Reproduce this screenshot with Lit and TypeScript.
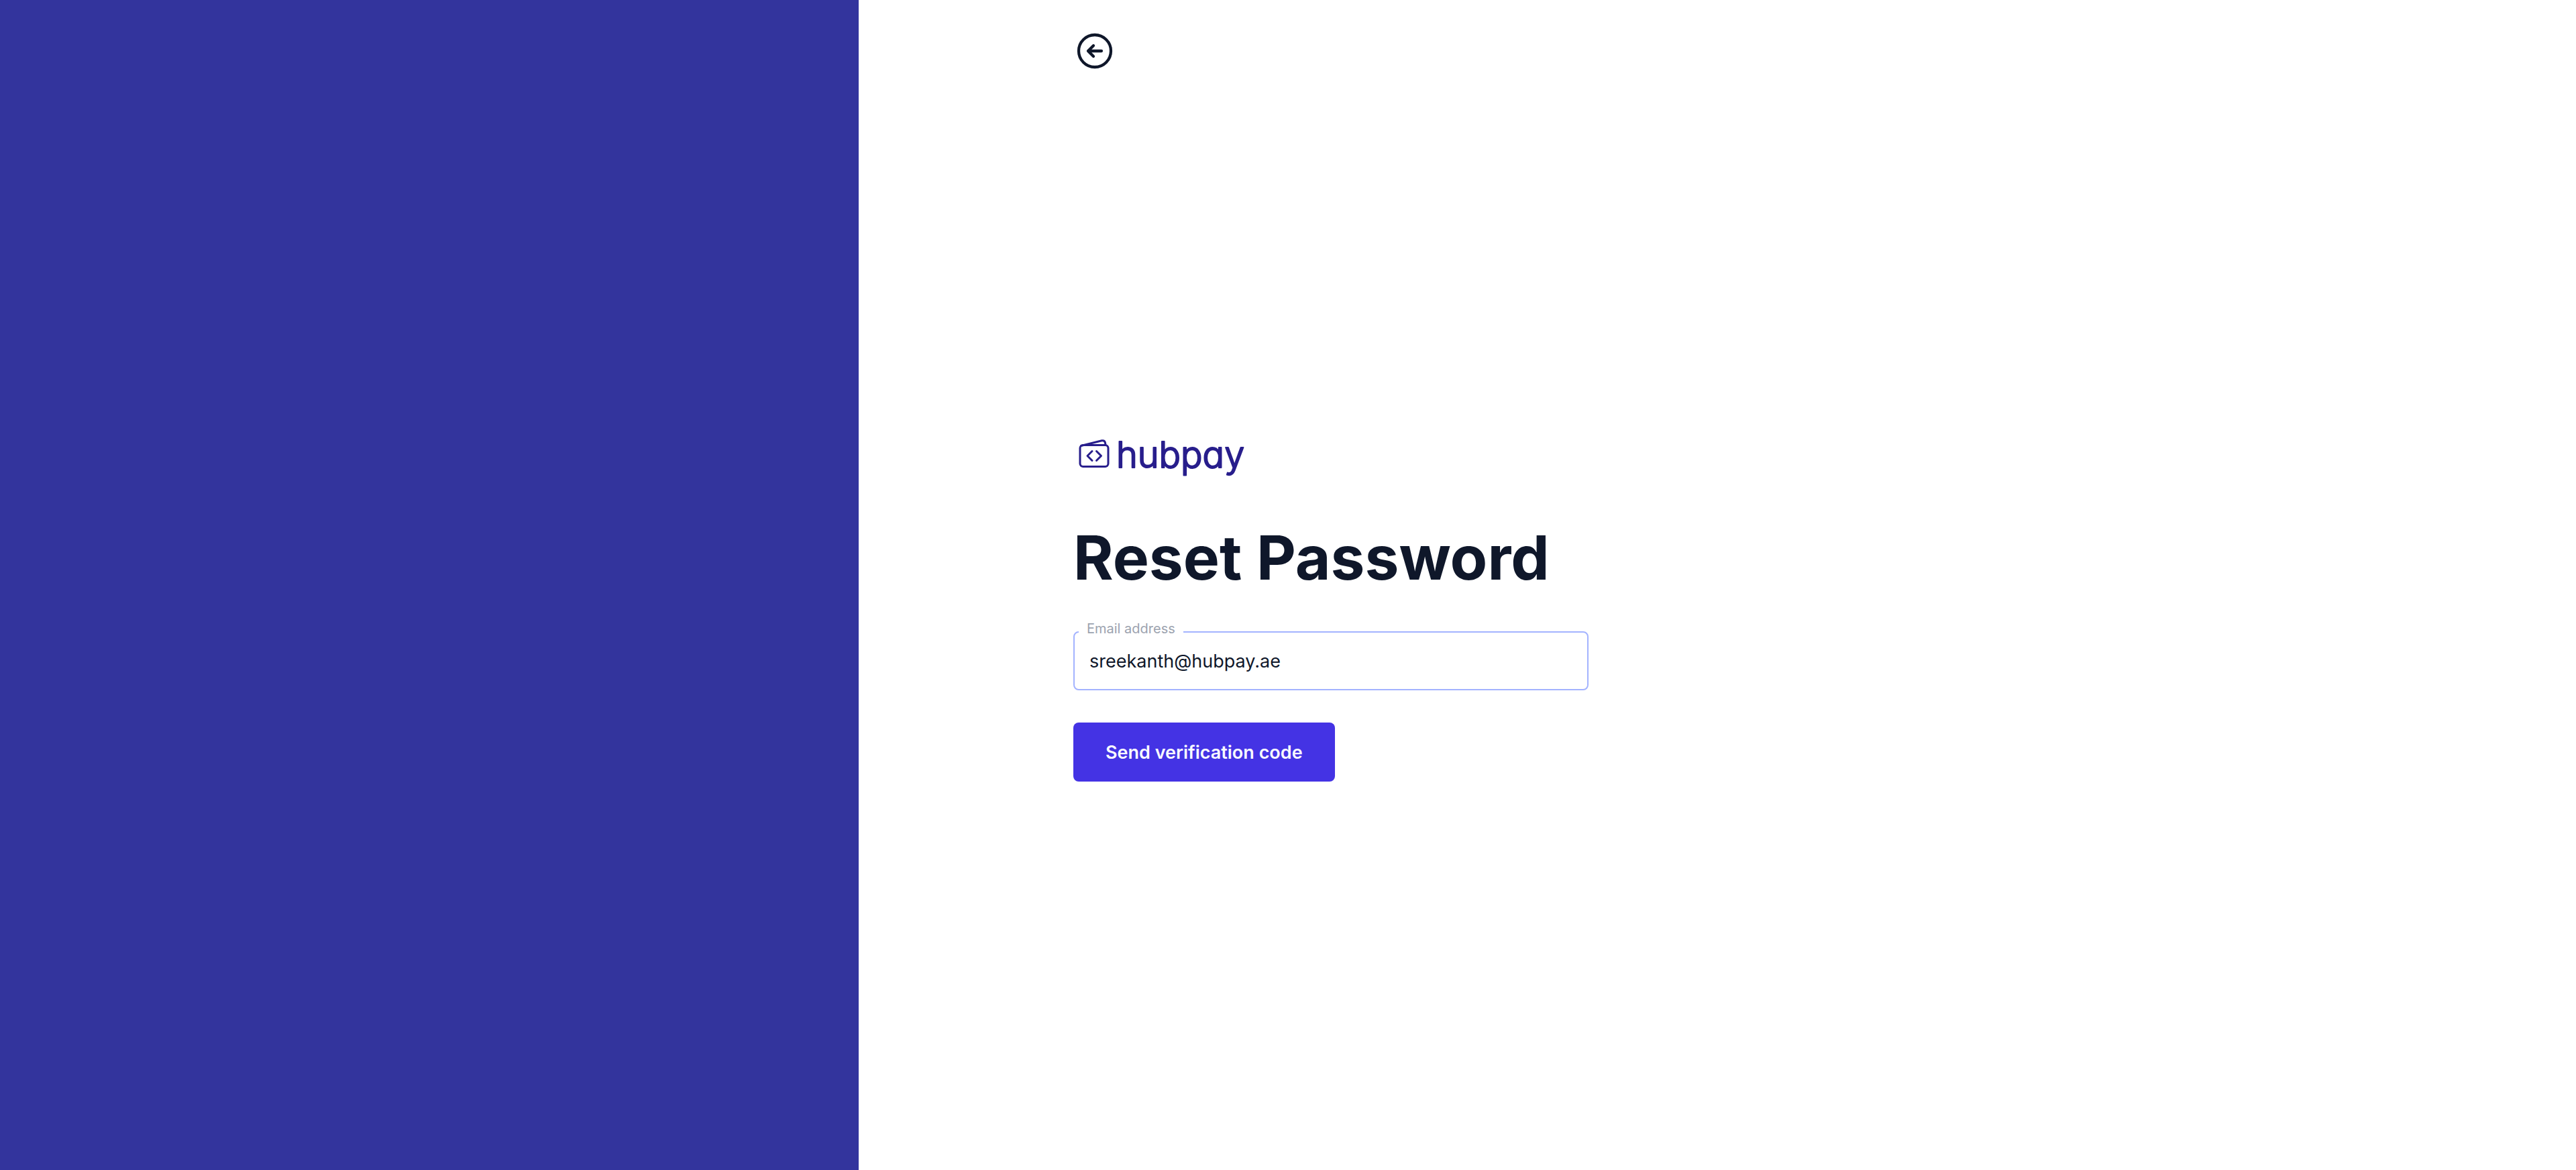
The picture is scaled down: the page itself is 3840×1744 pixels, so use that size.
import { LitElement, html, css } from "lit";
import { customElement, state } from "lit/decorators.js";

@customElement("hubpay-logo")
class HubpayLogo extends LitElement {
  static styles = css`
    :host {
      display: block;
    }
    .logo {
      display: block;
      width: 264px;
      height: 72px;
      overflow: visible;
    }
    .line {
      fill: none;
      stroke: #281e8c;
      stroke-width: 3;
      stroke-linecap: round;
      stroke-linejoin: round;
    }
    .word {
      font-family: Inter, sans-serif;
      font-size: 54px;
      font-weight: 300;
      font-feature-settings: "cv11";
      fill: #281e8c;
      stroke: #281e8c;
      stroke-width: 2;
      stroke-linejoin: round;
    }
  `;

  render() {
    return html`
      <svg class="logo" viewBox="0 0 264 72" role="img" aria-label="hubpay">
        <rect class="line" x="10" y="18.5" width="42" height="32" rx="4.5" />
        <path class="line" d="M11.5 19.5 L42.5 11.8 Q46.5 11 47.4 14.6 L48 18" />
        <path class="line" d="M28 27.5 L21 34.5 L28 41.5 M34.5 27.5 L41.5 34.5 L34.5 41.5" />
        <text class="word" x="64" y="52">hubpay</text>
      </svg>
    `;
  }
}

@customElement("app-root")
class AppRoot extends LitElement {
  @state() private email = "sreekanth@hubpay.ae";

  static styles = css`
    :host {
      display: block;
      font-family: Inter, "Liberation Sans", sans-serif;
      color: #0f172a;
    }
    .page {
      display: grid;
      grid-template-columns: 1fr 2fr;
      min-height: 100vh;
      background: #ffffff;
    }
    .panel {
      background: #33349d;
    }
    .content {
      display: flex;
      flex-direction: column;
      padding: 44px 320px 42px;
    }
    .back {
      align-self: flex-start;
      display: block;
      padding: 0;
      border: 0;
      background: none;
      color: inherit;
      cursor: pointer;
    }
    .back-icon {
      display: block;
      width: 64px;
      height: 64px;
      fill: none;
      stroke: currentColor;
      stroke-width: 1.6;
      stroke-linecap: round;
      stroke-linejoin: round;
    }
    .form {
      flex: 1;
      display: flex;
      flex-direction: column;
      align-items: flex-start;
      justify-content: center;
      width: 100%;
      max-width: 768px;
    }
    .title {
      margin: 64px 0 60px;
      font-size: 91px;
      line-height: 100px;
      font-weight: 700;
      white-space: nowrap;
    }
    .field {
      position: relative;
      width: 100%;
      margin-bottom: 48px;
    }
    .label {
      position: absolute;
      top: -16px;
      left: 8px;
      padding: 0 12px;
      background: #ffffff;
      color: #9ca3af;
      font-size: 20px;
      line-height: 24px;
    }
    .input {
      display: block;
      box-sizing: border-box;
      width: 100%;
      height: 88px;
      padding: 0 22px;
      border: 2px solid #a3b3ff;
      border-radius: 8px;
      outline: none;
      background: transparent;
      color: inherit;
      font: inherit;
      font-size: 27px;
    }
    .submit {
      height: 88px;
      padding: 0 48px;
      border: 0;
      border-radius: 8px;
      background: #4433e4;
      color: #f9faff;
      font: inherit;
      font-size: 27px;
      font-weight: 600;
      cursor: pointer;
    }
  `;

  private onInput(e: Event) {
    this.email = (e.target as HTMLInputElement).value;
  }

  render() {
    return html`
      <div class="page">
        <aside class="panel"></aside>
        <main class="content">
          <button class="back" type="button" aria-label="Back">
            <svg class="back-icon" viewBox="0 0 24 24" aria-hidden="true">
              <path d="M11.25 9l-3 3m0 0l3 3m-3-3h7.5M21 12a9 9 0 11-18 0 9 9 0 0118 0z" />
            </svg>
          </button>
          <form class="form" @submit=${(e: Event) => e.preventDefault()}>
            <hubpay-logo></hubpay-logo>
            <h1 class="title">Reset Password</h1>
            <div class="field">
              <input
                class="input"
                id="email"
                type="email"
                .value=${this.email}
                @input=${this.onInput}
              />
              <label class="label" for="email">Email address</label>
            </div>
            <button class="submit" type="submit">Send verification code</button>
          </form>
        </main>
      </div>
    `;
  }
}
